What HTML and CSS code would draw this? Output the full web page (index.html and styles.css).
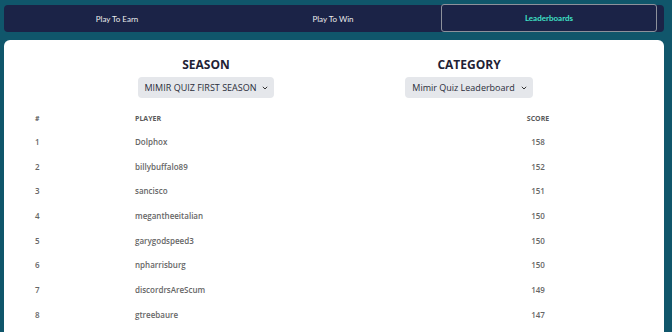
FILE: index.html
```html
<!DOCTYPE html>
<html lang="en">
<head>
    <meta charset="UTF-8">
    <meta name="viewport" content="width=device-width, initial-scale=1.0">
    <title>Mimir Quiz - Leaderboards</title>
    <link rel="stylesheet" href="styles.css">
</head>
<body>

    <nav class="tabs">
        <a class="tab" href="#">Play To Earn</a>
        <a class="tab" href="#">Play To Win</a>
        <a class="tab active" href="#">Leaderboards</a>
    </nav>

    <div class="card">
        <div class="filters">
            <div class="filter">
                <h2>SEASON</h2>
                <div class="select">
                    <span>MIMIR QUIZ FIRST SEASON</span>
                    <svg class="chevron" width="6" height="4" viewBox="0 0 6 4"><path d="M0.8 0.8 L3 3 L5.2 0.8" fill="none" stroke="#333" stroke-width="1"/></svg>
                </div>
            </div>
            <div class="filter">
                <h2>CATEGORY</h2>
                <div class="select">
                    <span>Mimir Quiz Leaderboard</span>
                    <svg class="chevron" width="6" height="4" viewBox="0 0 6 4"><path d="M0.8 0.8 L3 3 L5.2 0.8" fill="none" stroke="#333" stroke-width="1"/></svg>
                </div>
            </div>
        </div>

        <div class="board">
            <div class="row head">
                <span>#</span>
                <span>PLAYER</span>
                <span class="score">SCORE</span>
            </div>
            <div class="row"><span>1</span><span>Dolphox</span><span class="score">158</span></div>
            <div class="row"><span>2</span><span>billybuffalo89</span><span class="score">152</span></div>
            <div class="row"><span>3</span><span>sancisco</span><span class="score">151</span></div>
            <div class="row"><span>4</span><span>megantheeitalian</span><span class="score">150</span></div>
            <div class="row"><span>5</span><span>garygodspeed3</span><span class="score">150</span></div>
            <div class="row"><span>6</span><span>npharrisburg</span><span class="score">150</span></div>
            <div class="row"><span>7</span><span>discordrsAreScum</span><span class="score">149</span></div>
            <div class="row"><span>8</span><span>gtreebaure</span><span class="score">147</span></div>
        </div>
    </div>

</body>
</html>
```

FILE: styles.css
```css
body {
    font-family: 'Open Sans', 'Noto Sans', sans-serif;
    margin: 0;
    padding: 0;
    background-color: #10566b;
    color: #333;
    height: 332px;
    overflow: hidden;
}

.tabs {
    display: flex;
    height: 27px;
    margin: 5px 8px 0 4px;
    padding: 0 7px 0 5px;
    background-color: #1b2347;
    border-radius: 4px;
}

.tab {
    flex: 1;
    display: flex;
    align-items: center;
    justify-content: center;
    font-family: Lato, sans-serif;
    font-size: 8px;
    color: #ececec;
    text-decoration: none;
    border: 1px solid transparent;
    border-radius: 3px;
}

.tab.active {
    color: #3fe0c5;
    font-weight: 700;
    border-color: #8d919b;
    margin-top: -1px;
}

.card {
    margin: 8px 8px 0 4px;
    padding-top: 17px;
    background-color: #fff;
    border-radius: 6px 6px 0 0;
    height: 275px;
    overflow: hidden;
}

.filters {
    display: flex;
    width: 526px;
    margin: 0 auto;
    padding-left: 7px;
}

.filter {
    flex: 1;
    display: flex;
    flex-direction: column;
    align-items: center;
}

h2 {
    margin: 0 0 4px;
    font-size: 12px;
    line-height: 16px;
    font-weight: 700;
    color: #1f2235;
}

.select {
    display: flex;
    align-items: center;
    gap: 6px;
    height: 21px;
    padding: 0 6px 0 7px;
    background-color: #e5e7eb;
    border-radius: 4px;
    font-size: 9px;
    font-weight: 500;
    color: #2a2d3a;
}

.board {
    margin: 9px 0 0 21px;
}

.row {
    display: grid;
    grid-template-columns: 100px 363px 100px;
    align-items: center;
    height: 24.7px;
    font-size: 8px;
    font-weight: 600;
    color: #666;
}

.row span {
    padding-left: 10px;
}

.row .score {
    padding-left: 0;
    text-align: center;
}

.row.head {
    height: 22px;
    font-size: 7px;
    font-weight: 700;
    color: #5a5a5a;
}
```
